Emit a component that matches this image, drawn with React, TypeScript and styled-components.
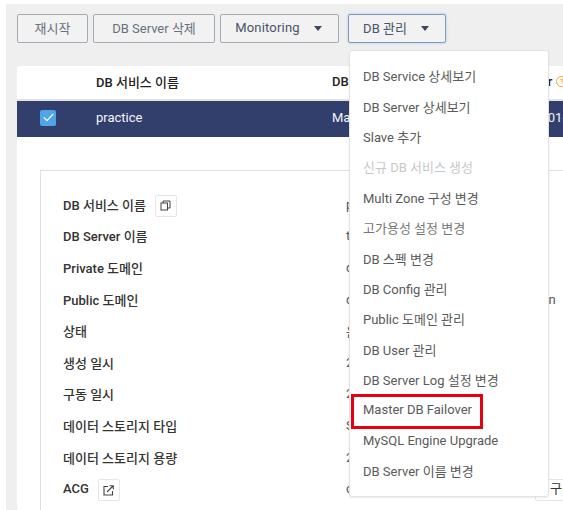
import styled, { createGlobalStyle } from "styled-components";

import type { FC } from "react";

const FONT = `Roboto, "Noto Sans CJK KR", sans-serif`;

const MENU_ITEMS = [
  { label: "DB Service 상세보기" },
  { label: "DB Server 상세보기" },
  { label: "Slave 추가" },
  { label: "신규 DB 서비스 생성", disabled: true },
  { label: "Multi Zone 구성 변경" },
  { label: "고가용성 설정 변경", muted: true },
  { label: "DB 스펙 변경" },
  { label: "DB Config 관리" },
  { label: "Public 도메인 관리" },
  { label: "DB User 관리" },
  { label: "DB Server Log 설정 변경" },
  { label: "Master DB Failover", marked: true },
  { label: "MySQL Engine Upgrade" },
  { label: "DB Server 이름 변경" },
];

const DETAILS = [
  { label: "DB 서비스 이름", value: "practice", icon: "copy" },
  { label: "DB Server 이름", value: "test-001-3km" },
  { label: "Private 도메인", value: "db-3k1m.vpc-cdb.ntruss.com" },
  { label: "Public 도메인", value: "db-3k1m5ab.pub-cdb.ntruss.domain" },
  { label: "상태", value: "운영중" },
  { label: "생성 일시", value: "2021-01-14 10:21:33" },
  { label: "구동 일시", value: "2021-01-14 10:24:07" },
  { label: "데이터 스토리지 타입", value: "SSD" },
  { label: "데이터 스토리지 용량", value: "20GB" },
  { label: "ACG", value: "cloud-mysql-acg", icon: "link", action: "구성 변경" },
];

const CopyIcon = () => (
  <svg width="11" height="11" viewBox="0 0 11 11" fill="none" stroke="#444" strokeWidth="1">
    <rect x="1" y="3" width="6.5" height="7" />
    <path d="M3 3V1h7v7H7.5" />
  </svg>
);

const LinkIcon = () => (
  <svg width="11" height="11" viewBox="0 0 11 11" fill="none" stroke="#444" strokeWidth="1.1">
    <path d="M5 1.5H1v8.5h8.5V6" />
    <path d="M4 7l6-6M6.5 .8h3.8v3.7" />
  </svg>
);

const App: FC = () => {
  return (
    <>
      <GlobalStyle />
      <Page>
        <Toolbar>
          <ToolButton $width={71} $muted>
            재시작
          </ToolButton>
          <ToolButton $width={122} $muted>
            DB Server 삭제
          </ToolButton>
          <ToolButton $width={119}>
            <MonitoringLabel>Monitoring</MonitoringLabel>
            <Caret />
          </ToolButton>
          <MenuAnchor>
            <ToolButton $width={98} $focused>
              DB 관리
              <Caret />
            </ToolButton>
            <Menu>
              {MENU_ITEMS.map((item) => (
                <MenuItem key={item.label} $disabled={item.disabled} $muted={item.muted}>
                  {item.label}
                  {item.marked && <RedMark />}
                </MenuItem>
              ))}
            </Menu>
          </MenuAnchor>
        </Toolbar>
        <Board>
          <HeadRow>
            <Cell />
            <Cell>DB 서비스 이름</Cell>
            <Cell>DB Role</Cell>
            <Cell>
              Server
              <HelpDot>?</HelpDot>
            </Cell>
          </HeadRow>
          <SelectedRow>
            <Cell>
              <CheckBox>
                <svg width="11" height="9" viewBox="0 0 11 9" fill="none" stroke="#fff" strokeWidth="1.3">
                  <path d="M.8 4.4l3.2 3.2L10.2.9" />
                </svg>
              </CheckBox>
            </Cell>
            <Cell>practice</Cell>
            <Cell>Master</Cell>
            <Cell>2021-01-14</Cell>
          </SelectedRow>
          <DetailCard>
            {DETAILS.map((row) => (
              <DetailRow key={row.label}>
                <DetailLabel>
                  {row.label}
                  {row.icon && (
                    <IconButton>{row.icon === "copy" ? <CopyIcon /> : <LinkIcon />}</IconButton>
                  )}
                </DetailLabel>
                <DetailValue>
                  {row.value}
                  {row.action && <ActionButton>{row.action}</ActionButton>}
                </DetailValue>
              </DetailRow>
            ))}
          </DetailCard>
        </Board>
      </Page>
    </>
  );
};

export default App;

const GlobalStyle = createGlobalStyle`
  html, body {
    margin: 0;
    height: 510px;
    overflow: hidden;
    background: #fff;
  }
  body {
    font-family: ${FONT};
    font-size: 13px;
  }
`;

const Page = styled.div`
  height: 506px;
  width: 557px;
  margin: 4px 0 0 6px;
  background: #efefef;
  overflow: hidden;
`;

const Toolbar = styled.div`
  display: flex;
  gap: 5px;
  padding: 10px 11px 23px;
  height: 29px;
`;

const ToolButton = styled.button<{ $width: number; $muted?: boolean; $focused?: boolean }>`
  display: flex;
  align-items: center;
  justify-content: center;
  gap: 14px;
  flex: none;
  box-sizing: border-box;
  width: ${(props) => props.$width}px;
  height: 29px;
  padding: 0 0 2px;
  background: #f2f2f2;
  border: 1px solid ${(props) => (props.$focused ? "#7f9cc0" : "#a4abb5")};
  border-radius: 2px;
  box-shadow: ${(props) => (props.$focused ? "0 0 3px #a9c8ea" : "none")};
  color: ${(props) => (props.$muted ? "#69707c" : "#48536a")};
  font-family: ${FONT};
  font-size: 13px;
`;

const MonitoringLabel = styled.span`
  letter-spacing: 0.2px;
`;

const Caret = styled.span`
  width: 0;
  height: 0;
  margin: 2px 2px 0 0;
  border-left: 4.5px solid transparent;
  border-right: 4.5px solid transparent;
  border-top: 5px solid #3c4660;
`;

const MenuAnchor = styled.div`
  position: relative;
  margin-left: 4px;
`;

const Menu = styled.div`
  position: absolute;
  z-index: 2;
  top: 36px;
  left: 1px;
  box-sizing: border-box;
  width: 200px;
  height: 447px;
  padding: 9.5px 0;
  background: #fff;
  border: 1px solid #e2e2e2;
  border-radius: 3px;
  box-shadow: 0 1px 2px rgba(0, 0, 0, 0.08);
`;

const MenuItem = styled.div<{ $disabled?: boolean; $muted?: boolean }>`
  position: relative;
  display: flex;
  align-items: center;
  height: 30.4px;
  padding-left: 13px;
  color: ${(props) => (props.$disabled ? "#c8c8c8" : props.$muted ? "#777" : "#5a5a5a")};
  font-size: 13px;
  white-space: nowrap;
`;

const RedMark = styled.span`
  position: absolute;
  top: -1px;
  left: 1px;
  box-sizing: border-box;
  width: 132px;
  height: 35px;
  border: 3px solid #e60012;
`;

const Board = styled.div`
  width: 700px;
  height: 444px;
  margin-left: 11px;
  background: #fff;
  border-radius: 2px;
`;

const HeadRow = styled.div`
  display: grid;
  grid-template-columns: 79px 236px 183px 1fr;
  align-items: center;
  box-sizing: border-box;
  height: 35px;
  padding-bottom: 3px;
  border-bottom: 2px solid #e4e4e4;
  color: #222;
  font-weight: 500;
`;

const SelectedRow = styled.div`
  display: grid;
  grid-template-columns: 79px 236px 183px 1fr;
  align-items: center;
  box-sizing: border-box;
  height: 36px;
  padding-bottom: 3px;
  background: #323e6b;
  color: #f4f6fb;
`;

const Cell = styled.div`
  display: flex;
  align-items: center;
  white-space: nowrap;
`;

const HelpDot = styled.span`
  display: flex;
  align-items: center;
  justify-content: center;
  box-sizing: border-box;
  width: 11px;
  height: 11px;
  margin-left: 4px;
  border: 1px solid #f0a63c;
  border-radius: 50%;
  color: #f0a63c;
  font-size: 8px;
`;

const CheckBox = styled.span`
  display: flex;
  align-items: center;
  justify-content: center;
  width: 16px;
  height: 16px;
  margin-left: 23px;
  background: #4ea5e8;
  border-radius: 2px;
`;

const DetailCard = styled.div`
  box-sizing: border-box;
  width: 640px;
  height: 360px;
  margin: 33px 0 0 23px;
  padding-top: 17.5px;
  border: 1px solid #e0e0e0;
  border-bottom: 0;
`;

const DetailRow = styled.div`
  display: grid;
  grid-template-columns: 283px 1fr;
  align-items: center;
  height: 31.6px;
  padding-left: 22px;
`;

const DetailLabel = styled.div`
  display: flex;
  align-items: center;
  gap: 9px;
  color: #333;
  font-weight: 500;
  white-space: nowrap;
`;

const DetailValue = styled.div`
  display: flex;
  align-items: center;
  color: #555;
  white-space: nowrap;
`;

const IconButton = styled.span`
  position: relative;
  top: 1.5px;
  display: flex;
  align-items: center;
  justify-content: center;
  box-sizing: border-box;
  width: 22px;
  height: 22px;
  margin-top: -4px;
  margin-bottom: -4px;
  background: #fff;
  border: 1px solid #e6e6e6;
  border-radius: 2px;
`;

const ActionButton = styled.span`
  position: relative;
  top: 1px;
  box-sizing: border-box;
  height: 22px;
  margin-left: 94px;
  padding: 0 8px 0 14px;
  border: 1px solid #e6e6e6;
  border-radius: 2px;
  color: #333;
  line-height: 18px;
`;
